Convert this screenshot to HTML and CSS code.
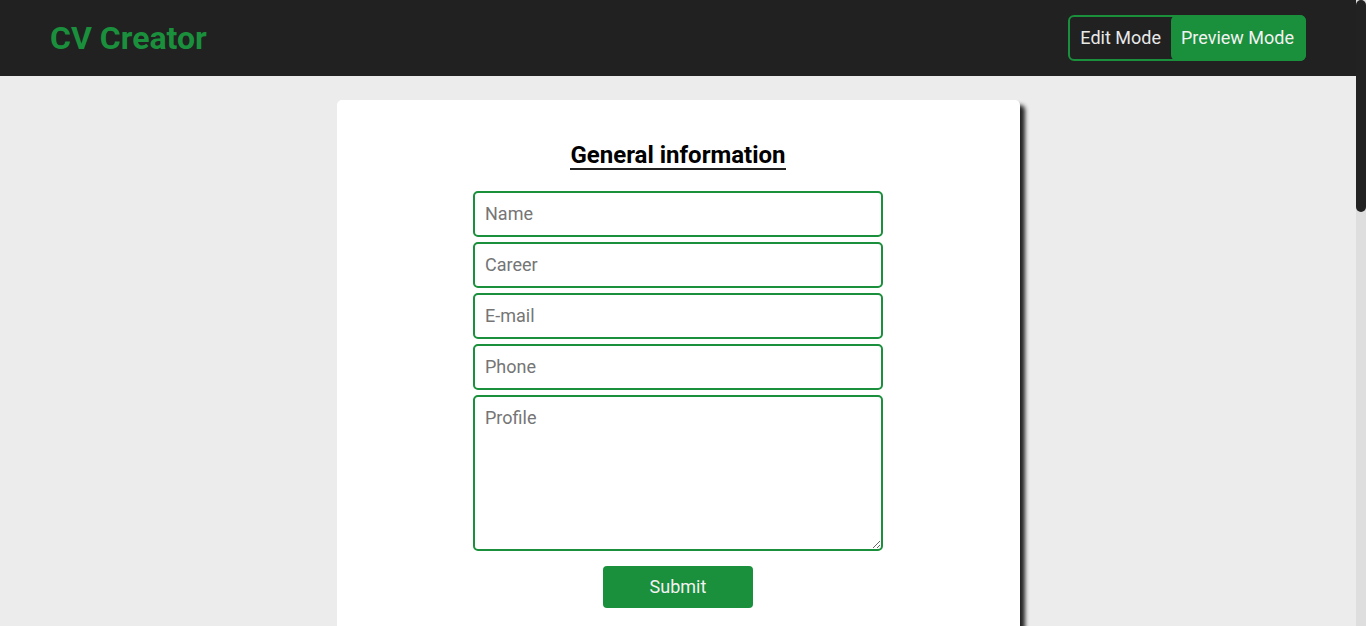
FILE: index.html
```html
<!DOCTYPE html>
<html lang="en">
<head>
<meta charset="utf-8">
<title>CV Creator</title>
<link rel="stylesheet" href="styles.css">
</head>
<body>
<header class="topbar">
  <h1 class="brand">CV Creator</h1>
  <div class="mode-toggle">
    <button class="mode-btn" type="button">Edit Mode</button>
    <button class="mode-btn active" type="button">Preview Mode</button>
  </div>
</header>
<main class="main">
  <section class="card">
    <h2 class="section-title">General information</h2>
    <form class="form">
      <input class="field" type="text" placeholder="Name">
      <input class="field" type="text" placeholder="Career">
      <input class="field" type="text" placeholder="E-mail">
      <input class="field" type="text" placeholder="Phone">
      <textarea class="field area" placeholder="Profile"></textarea>
      <button class="submit" type="button">Submit</button>
    </form>
  </section>
</main>
<div class="scrollbar" aria-hidden="true"><div class="scroll-thumb"></div></div>
</body>
</html>
```
FILE: styles.css
```css
* { box-sizing: border-box; }
html { background: #ececec; }
::-webkit-scrollbar { width: 0; height: 0; }
body {
  margin: 0;
  padding-right: 10px;
  font-family: Roboto, "Liberation Sans", sans-serif;
  background: #ececec;
}
.scrollbar {
  position: fixed;
  top: 0;
  right: 0;
  width: 10px;
  height: 100vh;
  background: #dedede;
}
.scroll-thumb {
  height: 212px;
  background: #222;
  border-radius: 5px;
}
.topbar {
  height: 76px;
  background: #212121;
  display: flex;
  align-items: center;
  justify-content: space-between;
  padding: 0 50px;
}
.brand {
  margin: 0;
  font-size: 32px;
  font-weight: 700;
  color: #1a8f3c;
}
.mode-toggle {
  display: flex;
  height: 46px;
  border: 2px solid #1a8f3c;
  border-radius: 6px;
}
.mode-btn {
  font-family: inherit;
  font-size: 18px;
  color: #e8e8e8;
  background: transparent;
  border: none;
  padding: 0 10px 2px;
  border-radius: 5px;
}
.mode-btn.active {
  background: #1a8f3c;
  color: #f2f2f2;
  margin: -2px -2px -2px 0;
  padding: 0 12px 2px 10px;
  border-radius: 6px;
}
.main {
  display: flex;
  justify-content: center;
  padding: 24px 0;
}
.card {
  width: 683px;
  min-height: 1720px;
  background: #fff;
  border-radius: 5px;
  box-shadow: 5px 5px 4px rgba(0,0,0,0.85);
  display: flex;
  flex-direction: column;
  align-items: center;
  padding-top: 42px;
}
.section-title {
  margin: 0;
  font-size: 24px;
  font-weight: 700;
  line-height: 26px;
  color: #000;
  border-bottom: 2px solid #222;
}
.form {
  margin-top: 21px;
  width: 410px;
  display: flex;
  flex-direction: column;
  align-items: center;
}
.field {
  width: 410px;
  height: 46px;
  margin-bottom: 5px;
  border: 2px solid #1a8f3c;
  border-radius: 5px;
  padding: 0 10px 2px;
  font-family: inherit;
  font-size: 18px;
  color: #222;
  outline: none;
}
.field::placeholder { color: #757575; }
.area {
  height: 156px;
  padding: 10px;
  resize: vertical;
  margin-bottom: 0;
}
.submit {
  margin-top: 15px;
  width: 150px;
  height: 42px;
  background: #1a8f3c;
  color: #f2f2f2;
  border: none;
  border-radius: 4px;
  padding-bottom: 2px;
  font-family: inherit;
  font-size: 18px;
}
```
